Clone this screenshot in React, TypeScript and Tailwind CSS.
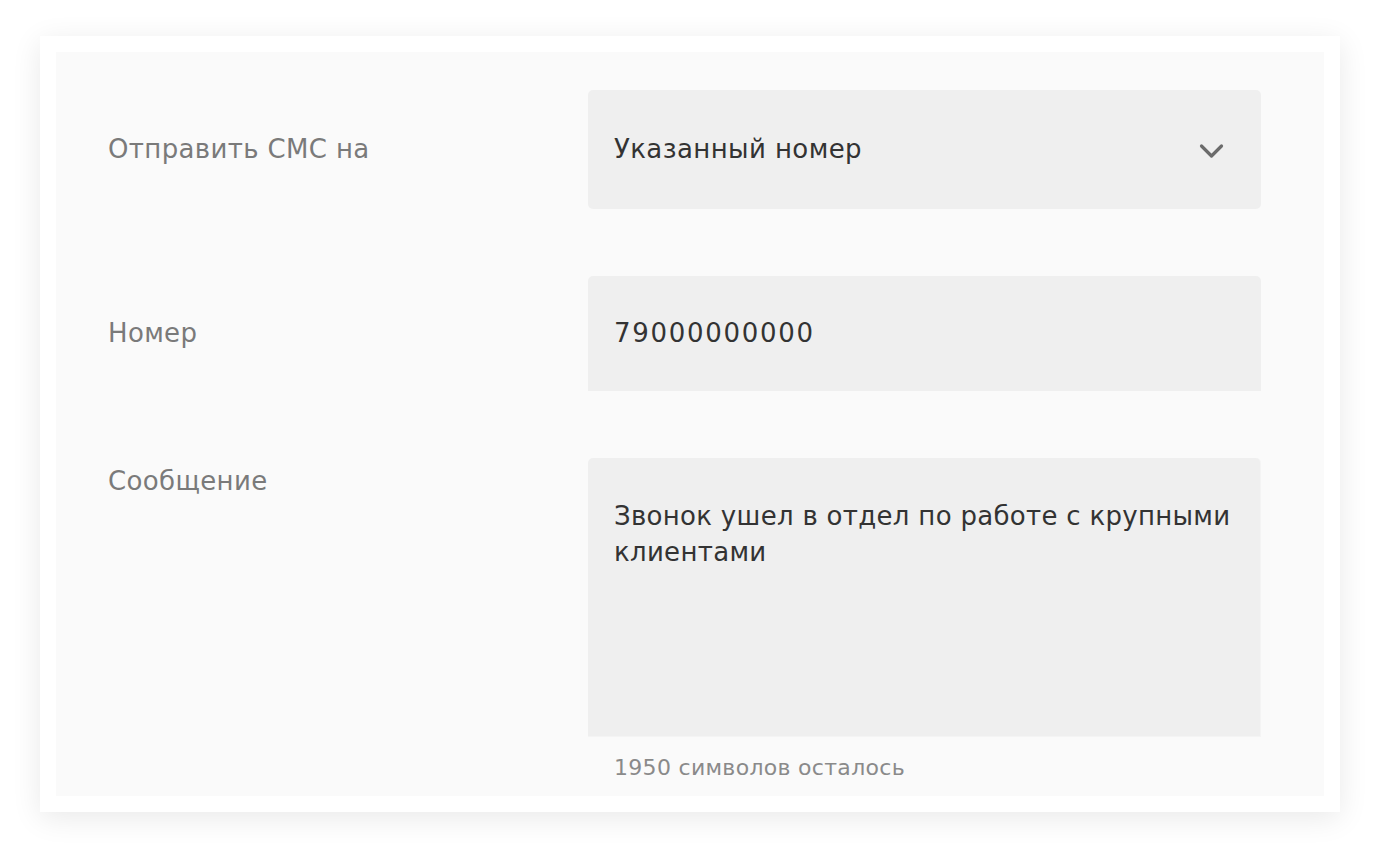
import React from "react";

export default function App() {
  const font = { fontFamily: '"DejaVu Sans", "Noto Sans", sans-serif' };
  return (
    <div className="min-h-[858px] w-[1380px] bg-white pt-[36px] pl-[40px]" style={font}>
      <div className="w-[1300px] h-[776px] bg-white p-[16px] shadow-[0_6px_28px_rgba(0,0,0,0.09)]">
        <div className="h-full w-full bg-[#fafafa] pl-[52px] pr-[63px] pt-[38px]">
          <div className="grid grid-cols-[480px_673px] gap-y-[67px]">
            <div className="flex h-[119px] items-center text-[26px] tracking-[0.35px] text-[#7a7a7a]">
              Отправить СМС на
            </div>
            <div className="flex h-[119px] items-center justify-between rounded-[5px] bg-[#efefef] pl-[26px] pr-[36px]">
              <span className="text-[26px] tracking-[0.4px] text-[#333333]">Указанный номер</span>
              <svg width="26" height="16" viewBox="0 0 26 16" className="mt-[2px]">
                <path d="M2.5 3 L12.5 13 L22.5 3" fill="none" stroke="#6b6b6b" strokeWidth="3.2" strokeLinecap="round" strokeLinejoin="round" />
              </svg>
            </div>

            <div className="flex h-[115px] items-center text-[26px] tracking-[0.35px] text-[#7a7a7a]">Номер</div>
            <div className="flex h-[115px] items-center rounded-t-[5px] bg-[#efefef] pl-[26px]">
              <span className="text-[26px] tracking-[1.7px] text-[#333333]">79000000000</span>
            </div>

            <div className="pt-[6px] text-[26px] leading-[34px] tracking-[0.35px] text-[#7a7a7a]">Сообщение</div>
            <div className="flex flex-col">
              <div className="h-[279px] rounded-t-[5px] border-b border-r border-[#f4f4f4] bg-[#efefef] px-[26px] pt-[40px] text-[26px] leading-[36px] tracking-[0.3px] text-[#333333]">
                Звонок ушел в отдел по работе с крупными клиентами
              </div>
              <div className="pl-[26px] pt-[14px] text-[22px] tracking-[0.3px] text-[#8a8a8a]">1950 символов осталось</div>
            </div>
          </div>
        </div>
      </div>
    </div>
  );
}
